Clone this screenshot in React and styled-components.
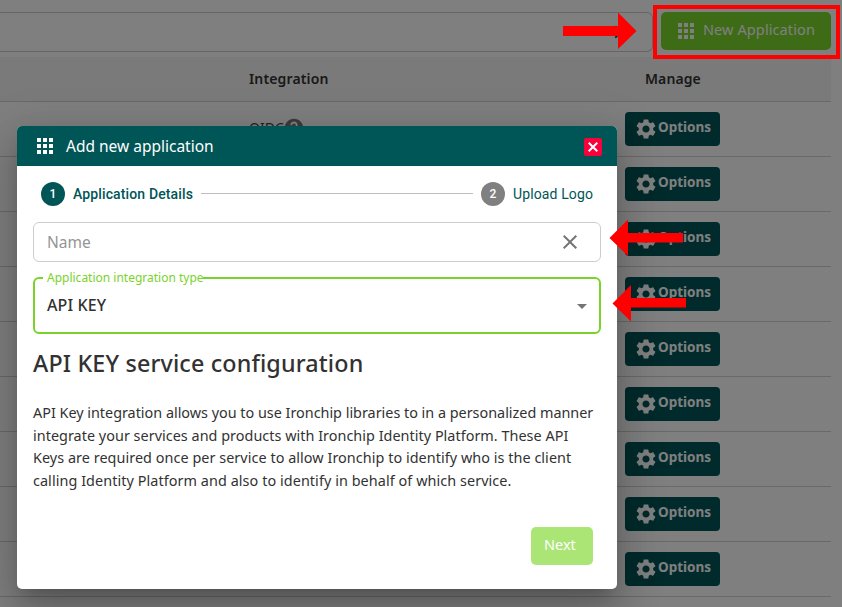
import React from "react";
import styled, { createGlobalStyle } from "styled-components";
import { MdApps, MdSettings, MdClose, MdHelp, MdArrowDropDown } from "react-icons/md";

const GlobalStyle = createGlobalStyle`
  * { box-sizing: border-box; }
  html, body { margin: 0; padding: 0; width: 842px; height: 607px; overflow: hidden; background: #fff; }
  body { font-family: "Noto Sans", sans-serif; color: #323232; }
  svg { display: block; flex: none; }
`;

const Page = styled.div`
  position: relative;
  width: 842px;
  height: 607px;
  overflow: hidden;
`;

/* Text run; $track is the letter spacing in px */
const Label = styled.span`
  display: block;
  white-space: nowrap;
  font-size: ${(p) => p.$size}px;
  font-weight: ${(p) => p.$weight || 400};
  letter-spacing: ${(p) => p.$track || 0}px;
  line-height: ${(p) => p.$line || 20}px;
`;

const Toolbar = styled.div`
  display: flex;
  justify-content: space-between;
  width: 831px;
  height: 57px;
  padding-top: 12px;
`;

const SearchField = styled.div`
  display: flex;
  justify-content: flex-end;
  align-items: center;
  width: 653px;
  height: 40px;
  padding-right: 20px;
  border: 1px solid #ccc;
  border-left: 0;
  border-radius: 0 6px 6px 0;
`;

const NewButton = styled.button`
  display: flex;
  align-items: center;
  width: 170px;
  height: 38px;
  padding: 0 0 0 13px;
  border: 0;
  border-radius: 5px;
  background: #7dd62d;
  color: #fff;
  font-family: inherit;
  gap: 5px;
  text-align: left;
  & > span { margin-top: -4px; }
`;

const Table = styled.div`
  width: 831px;
`;

const Row = styled.div`
  display: grid;
  grid-template-columns: 249px 376px 206px;
  align-items: center;
  height: ${(p) => (p.$head ? 45 : 55)}px;
  border-bottom: 1px solid #d3d3d3;
  background: ${(p) => (p.$head ? "#f5f5f5" : "transparent")};
`;

const ManageHead = styled.div`
  padding-left: 20px;
`;

const Integration = styled.div`
  display: flex;
  align-items: center;
  height: 24px;
  margin-top: -3px;
  color: #444;
  & > svg { color: #777; margin-left: -1px; }
`;

const OptionsButton = styled.button`
  display: flex;
  align-items: center;
  width: 95px;
  height: 34px;
  padding: 0 0 0 9px;
  border: 0;
  border-radius: 4px;
  background: #005557;
  color: #fff;
  font-family: inherit;
  & > span { margin: -4px 0 0 0; }
`;

const Backdrop = styled.div`
  position: absolute;
  inset: 0;
  background: rgba(0, 0, 0, 0.5);
`;

const Dialog = styled.section`
  position: absolute;
  left: 17px;
  top: 126px;
  display: flex;
  flex-direction: column;
  width: 600px;
  height: 463px;
  border-radius: 5px;
  overflow: hidden;
  background: #fff;
  box-shadow: 0 11px 15px -7px rgba(0, 0, 0, 0.2), 0 24px 38px 3px rgba(0, 0, 0, 0.14),
    0 9px 46px 8px rgba(0, 0, 0, 0.12);
`;

const DialogHeader = styled.header`
  display: flex;
  align-items: center;
  height: 40px;
  padding: 0 15px 0 16px;
  background: #005557;
  color: #fff;
  & > span { margin-left: 9px; }
`;

const CloseButton = styled.button`
  display: flex;
  align-items: center;
  justify-content: center;
  width: 18px;
  height: 18px;
  margin: 2px 0 0 auto;
  padding: 0;
  border: 0;
  border-radius: 2px;
  background: #f8003c;
  color: #fff;
`;

const DialogBody = styled.div`
  display: flex;
  flex-direction: column;
  flex: 1;
  padding: 16px 16px 24px;
`;

const Stepper = styled.div`
  display: flex;
  align-items: center;
  height: 24px;
  padding: 0 8px;
  gap: 8px;
  color: #005557;
  font-family: Roboto, sans-serif;
`;

const StepCircle = styled.span`
  width: 24px;
  height: 24px;
  border-radius: 50%;
  background: ${(p) => (p.$active ? "#005557" : "#808080")};
  color: #fff;
  font-size: 12px;
  font-weight: 500;
  line-height: 24px;
  text-align: center;
`;

const StepLine = styled.span`
  flex: 1;
  height: 1px;
  margin-top: -1px;
  background: #bdbdbd;
`;

const NameField = styled.div`
  display: flex;
  align-items: center;
  justify-content: space-between;
  height: 40px;
  margin-top: 16px;
  padding: 0 18px 0 13px;
  border: 1px solid #ccc;
  border-radius: 6px;
  color: #959595;
  & > svg { color: #757575; }
`;

const SelectField = styled.div`
  position: relative;
  display: flex;
  align-items: center;
  justify-content: space-between;
  height: 57px;
  margin-top: 15px;
  padding: 0 5px 2px 12px;
  border: 2px solid #7ad32b;
  border-radius: 6px;
  & > svg { color: #757575; margin-top: 2px; }
`;

const FloatingLabel = styled.div`
  position: absolute;
  left: 8px;
  top: -11px;
  width: 160px;
  padding-left: 4px;
  background: #fff;
  color: #7ad32b;
`;

const Heading = styled.h2`
  margin: 12px 0 0;
  font-weight: 500;
`;

const Description = styled.div`
  margin-top: 22px;
`;

const NextButton = styled.button`
  align-self: flex-end;
  width: 62px;
  height: 38px;
  margin: auto 8px 0 0;
  padding: 0 0 4px 13px;
  border: 0;
  border-radius: 5px;
  background: #abe575;
  color: #fff;
  font-family: inherit;
  text-align: left;
`;

const Markup = styled.svg`
  position: absolute;
  inset: 0;
  fill: #f00;
`;

const Highlight = styled.div`
  position: absolute;
  left: 653px;
  top: 5px;
  width: 187px;
  height: 54px;
  border: 4px solid #f00;
`;

const rows = ["OIDC", "", "", "", "", "", "", "", ""];

const lines = [
  ["API Key integration allows you to use Ironchip libraries to in a personalized manner", -0.01],
  ["integrate your services and products with Ironchip Identity Platform. These API", 0.03],
  ["Keys are required once per service to allow Ironchip to identify who is the client", 0.05],
  ["calling Identity Platform and also to identify in behalf of which service.", 0.07],
];

export default function App() {
  return (
    <Page>
      <GlobalStyle />
      <Toolbar>
        <SearchField><MdClose size={22} color="#444" /></SearchField>
        <NewButton>
          <MdApps size={24} />
          <Label $size={14.5} $track={0.1}>New Application</Label>
        </NewButton>
      </Toolbar>
      <Table>
        <Row $head>
          <span />
          <Label $size={14} $weight={600} $track={0.15}>Integration</Label>
          <ManageHead><Label $size={14} $weight={600} $track={0.1}>Manage</Label></ManageHead>
        </Row>
        {rows.map((name, i) => (
          <Row key={i}>
            <span />
            <Integration>
              {name && <><Label $size={14}>{name}</Label><MdHelp size={22} /></>}
            </Integration>
            <OptionsButton>
              <MdSettings size={24} />
              <Label $size={13.5} $weight={700}>Options</Label>
            </OptionsButton>
          </Row>
        ))}
      </Table>
      <Backdrop />
      <Dialog>
        <DialogHeader>
          <MdApps size={24} />
          <Label $size={15.5}>Add new application</Label>
          <CloseButton>
            <svg width="10" height="10" viewBox="0 0 10 10" fill="none" stroke="currentColor" strokeWidth="2">
              <path d="M.7.7l8.600 8.600M9.300.7L.7 9.300" />
            </svg>
          </CloseButton>
        </DialogHeader>
        <DialogBody>
          <Stepper>
            <StepCircle $active>1</StepCircle>
            <Label $size={14} $weight={500} $track={0.13}>Application Details</Label>
            <StepLine />
            <StepCircle>2</StepCircle>
            <Label $size={14} $track={0.12}>Upload Logo</Label>
          </Stepper>
          <NameField>
            <Label $size={15.5}>Name</Label>
            <MdClose size={24} />
          </NameField>
          <SelectField>
            <FloatingLabel><Label $size={12}>Application integration type</Label></FloatingLabel>
            <Label $size={16} $weight={500} $track={0.1}>API KEY</Label>
            <MdArrowDropDown size={24} />
          </SelectField>
          <Heading><Label $size={23.3} $weight={550} $track={0.16} $line={34}>API KEY service configuration</Label></Heading>
          <Description>
            {lines.map(([text, track]) => (
              <Label key={text} $size={14.4} $line={22.7} $track={track}>{text}</Label>
            ))}
          </Description>
          <NextButton><Label $size={14.5}>Next</Label></NextButton>
        </DialogBody>
      </Dialog>
      <Highlight />
      <Markup width="842" height="607" viewBox="0 0 842 607">
        <path d="M563 26h55V12.500L636.500 31 618 49V36h-55z" />
        <path d="M609.500 238 628 219.500V233h55v9.500h-55V256z" />
        <path d="M612.500 303.500 631 285v13h55v9.500h-55V321.500z" />
      </Markup>
    </Page>
  );
}
